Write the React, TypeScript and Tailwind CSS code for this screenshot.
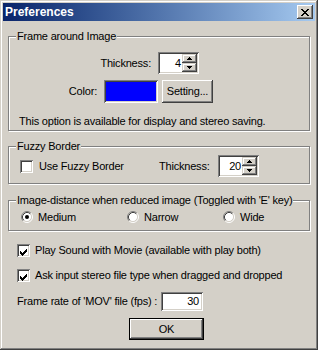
import React from 'react';

const raised =
  'bg-[#d4d0c8] shadow-[inset_-1px_-1px_#404040,inset_1px_1px_#ffffff,inset_-2px_-2px_#808080,inset_2px_2px_#d4d0c8]';
const sunken =
  'bg-white shadow-[inset_1px_1px_#808080,inset_-1px_-1px_#ffffff,inset_2px_2px_#404040,inset_-2px_-2px_#d4d0c8]';
const smallRaised =
  'bg-[#d4d0c8] shadow-[inset_-1px_-1px_#404040,inset_1px_1px_#d4d0c8,inset_-2px_-2px_#808080,inset_2px_2px_#ffffff]';

function CloseGlyph() {
  const rows = ['##....##', '.##..##.', '..####..', '...##...', '..####..', '.##..##.', '##....##'];
  return (
    <svg width="8" height="7" viewBox="0 0 8 7" shapeRendering="crispEdges">
      {rows.map((r, y) =>
        r.split('').map((c, x) => (c === '#' ? <rect key={`${x}-${y}`} x={x} y={y} width="1" height="1" fill="#000" /> : null))
      )}
    </svg>
  );
}

function Check() {
  const cols: [number, number][] = [
    [3, 7], [4, 8], [5, 9], [6, 8], [7, 7], [8, 6], [9, 5],
  ];
  return (
    <svg width="13" height="13" viewBox="0 0 13 13" shapeRendering="crispEdges" className="absolute left-0 top-0">
      {cols.map(([x, y]) => (
        <rect key={x} x={x} y={y} width="1" height="3" fill="#000" />
      ))}
    </svg>
  );
}

function Checkbox({ checked }: { checked?: boolean }) {
  return (
    <div className={`relative w-[13px] h-[13px] shrink-0 ${sunken}`}>
      {checked && <Check />}
    </div>
  );
}

function Radio({ checked }: { checked?: boolean }) {
  return (
    <svg width="12" height="12" viewBox="0 0 12 12" className="shrink-0">
      <circle cx="6" cy="6" r="4.5" fill="#fff" />
      <path d="M2.11 9.89 A5.5 5.5 0 0 1 9.89 2.11" stroke="#808080" fill="none" />
      <path d="M9.89 2.11 A5.5 5.5 0 0 1 2.11 9.89" stroke="#ffffff" fill="none" />
      <path d="M2.82 9.18 A4.5 4.5 0 0 1 9.18 2.82" stroke="#404040" fill="none" />
      <path d="M9.18 2.82 A4.5 4.5 0 0 1 2.82 9.18" stroke="#d4d0c8" fill="none" />
      {checked && <circle cx="6" cy="6" r="2" fill="#000" />}
    </svg>
  );
}

function SpinBox({ value }: { value: string }) {
  return (
    <div className={`w-[41px] h-[22px] p-[2px] flex ${sunken}`}>
      <div className="flex-1 text-right pr-[1px] leading-[18px]">{value}</div>
      <div className="w-[15px] flex flex-col">
        <div className={`flex-1 flex items-center justify-center ${smallRaised}`}>
          <svg width="5" height="3" viewBox="0 0 5 3" shapeRendering="crispEdges">
            <polygon points="2.5,0 5,3 0,3" fill="#000" />
          </svg>
        </div>
        <div className={`flex-1 flex items-center justify-center ${smallRaised}`}>
          <svg width="5" height="3" viewBox="0 0 5 3" shapeRendering="crispEdges">
            <polygon points="0,0 5,0 2.5,3" fill="#000" />
          </svg>
        </div>
      </div>
    </div>
  );
}

function Group({ label, className, children }: { label: string; className: string; children: React.ReactNode }) {
  return (
    <div className={`relative border border-[#808080] shadow-[inset_1px_1px_#ffffff,1px_1px_#ffffff] ${className}`}>
      <span className="absolute left-[7px] top-[-7px] bg-[#d4d0c8] px-[1px] leading-[13px] whitespace-nowrap">
        {label}
      </span>
      {children}
    </div>
  );
}

export default function App() {
  return (
    <div className="w-[318px] h-[350px] bg-[#d4d0c8] p-[3px] flex flex-col text-[11px] leading-[13px] tracking-[-0.2px] text-black font-['Liberation_Sans',Arial,sans-serif] shadow-[inset_-1px_-1px_#404040,inset_1px_1px_#d4d0c8,inset_-2px_-2px_#808080,inset_2px_2px_#ffffff]">
      <div className="h-[18px] flex items-center justify-between pl-[2px] pr-[2px] bg-gradient-to-r from-[#0a246a] to-[#a6caf0]">
        <span className="text-white font-bold text-[12px] tracking-normal">Preferences</span>
        <div className={`w-[16px] h-[14px] flex items-center justify-center ${raised}`}>
          <CloseGlyph />
        </div>
      </div>

      <div className="flex flex-col px-[5px]">
        <Group label="Frame around Image" className="mt-[15px] h-[95px]">
          <div className="mt-[15px] flex items-center h-[22px]">
            <div className="w-[142px] text-right whitespace-nowrap">Thickness:</div>
            <div className="ml-[7px]">
              <SpinBox value="4" />
            </div>
          </div>
          <div className="mt-[6px] flex items-center h-[23px]">
            <div className="w-[88px] text-right whitespace-nowrap">Color:</div>
            <div className="ml-[7px] w-[54px] h-[23px] p-[2px] bg-[#0000ff] shadow-[inset_1px_1px_#808080,inset_-1px_-1px_#ffffff,inset_2px_2px_#404040,inset_-2px_-2px_#d4d0c8]" />
            <div className={`ml-[4px] w-[51px] h-[23px] flex items-center justify-center whitespace-nowrap ${raised}`}>
              Setting...
            </div>
          </div>
          <div className="mt-[12px] pl-[10px] whitespace-nowrap">This option is available for display and stereo saving.</div>
        </Group>

        <Group label="Fuzzy Border" className="mt-[15px] h-[38px]">
          <div className="mt-[8px] flex items-center h-[22px]">
            <div className="w-[150px] pl-[11px] flex items-center">
              <Checkbox />
              <span className="ml-[6px] whitespace-nowrap">Use Fuzzy Border</span>
            </div>
            <div className="w-[50px] text-right whitespace-nowrap">Thickness:</div>
            <div className="ml-[9px]">
              <SpinBox value="20" />
            </div>
          </div>
        </Group>

        <Group label="Image-distance when reduced image (Toggled with 'E' key)" className="mt-[16px] h-[31px]">
          <div className="mt-[8px] flex items-center h-[16px] pl-[12px]">
            <div className="w-[106px] flex items-center">
              <Radio checked />
              <span className="ml-[5px]">Medium</span>
            </div>
            <div className="w-[96px] flex items-center">
              <Radio />
              <span className="ml-[5px]">Narrow</span>
            </div>
            <div className="flex items-center">
              <Radio />
              <span className="ml-[5px]">Wide</span>
            </div>
          </div>
        </Group>

        <div className="mt-[11px] h-[16px] flex items-center pl-[9px]">
          <Checkbox checked />
          <span className="ml-[5px] whitespace-nowrap">Play Sound with Movie (available with play both)</span>
        </div>
        <div className="mt-[9px] h-[16px] flex items-center pl-[9px]">
          <Checkbox checked />
          <span className="ml-[5px] whitespace-nowrap">Ask input stereo file type when dragged and dropped</span>
        </div>

        <div className="mt-[9px] h-[19px] flex items-center">
          <div className="w-[153px] pl-[9px] whitespace-nowrap">Frame rate of 'MOV' file (fps) :</div>
          <div className={`w-[42px] h-[19px] text-right pr-[4px] leading-[19px] ${sunken}`}>30</div>
        </div>

        <div className="mt-[7px] ml-[121px] w-[75px] h-[22px] border border-black">
          <div className={`w-full h-full flex items-center justify-center ${raised}`}>OK</div>
        </div>
      </div>
    </div>
  );
}
